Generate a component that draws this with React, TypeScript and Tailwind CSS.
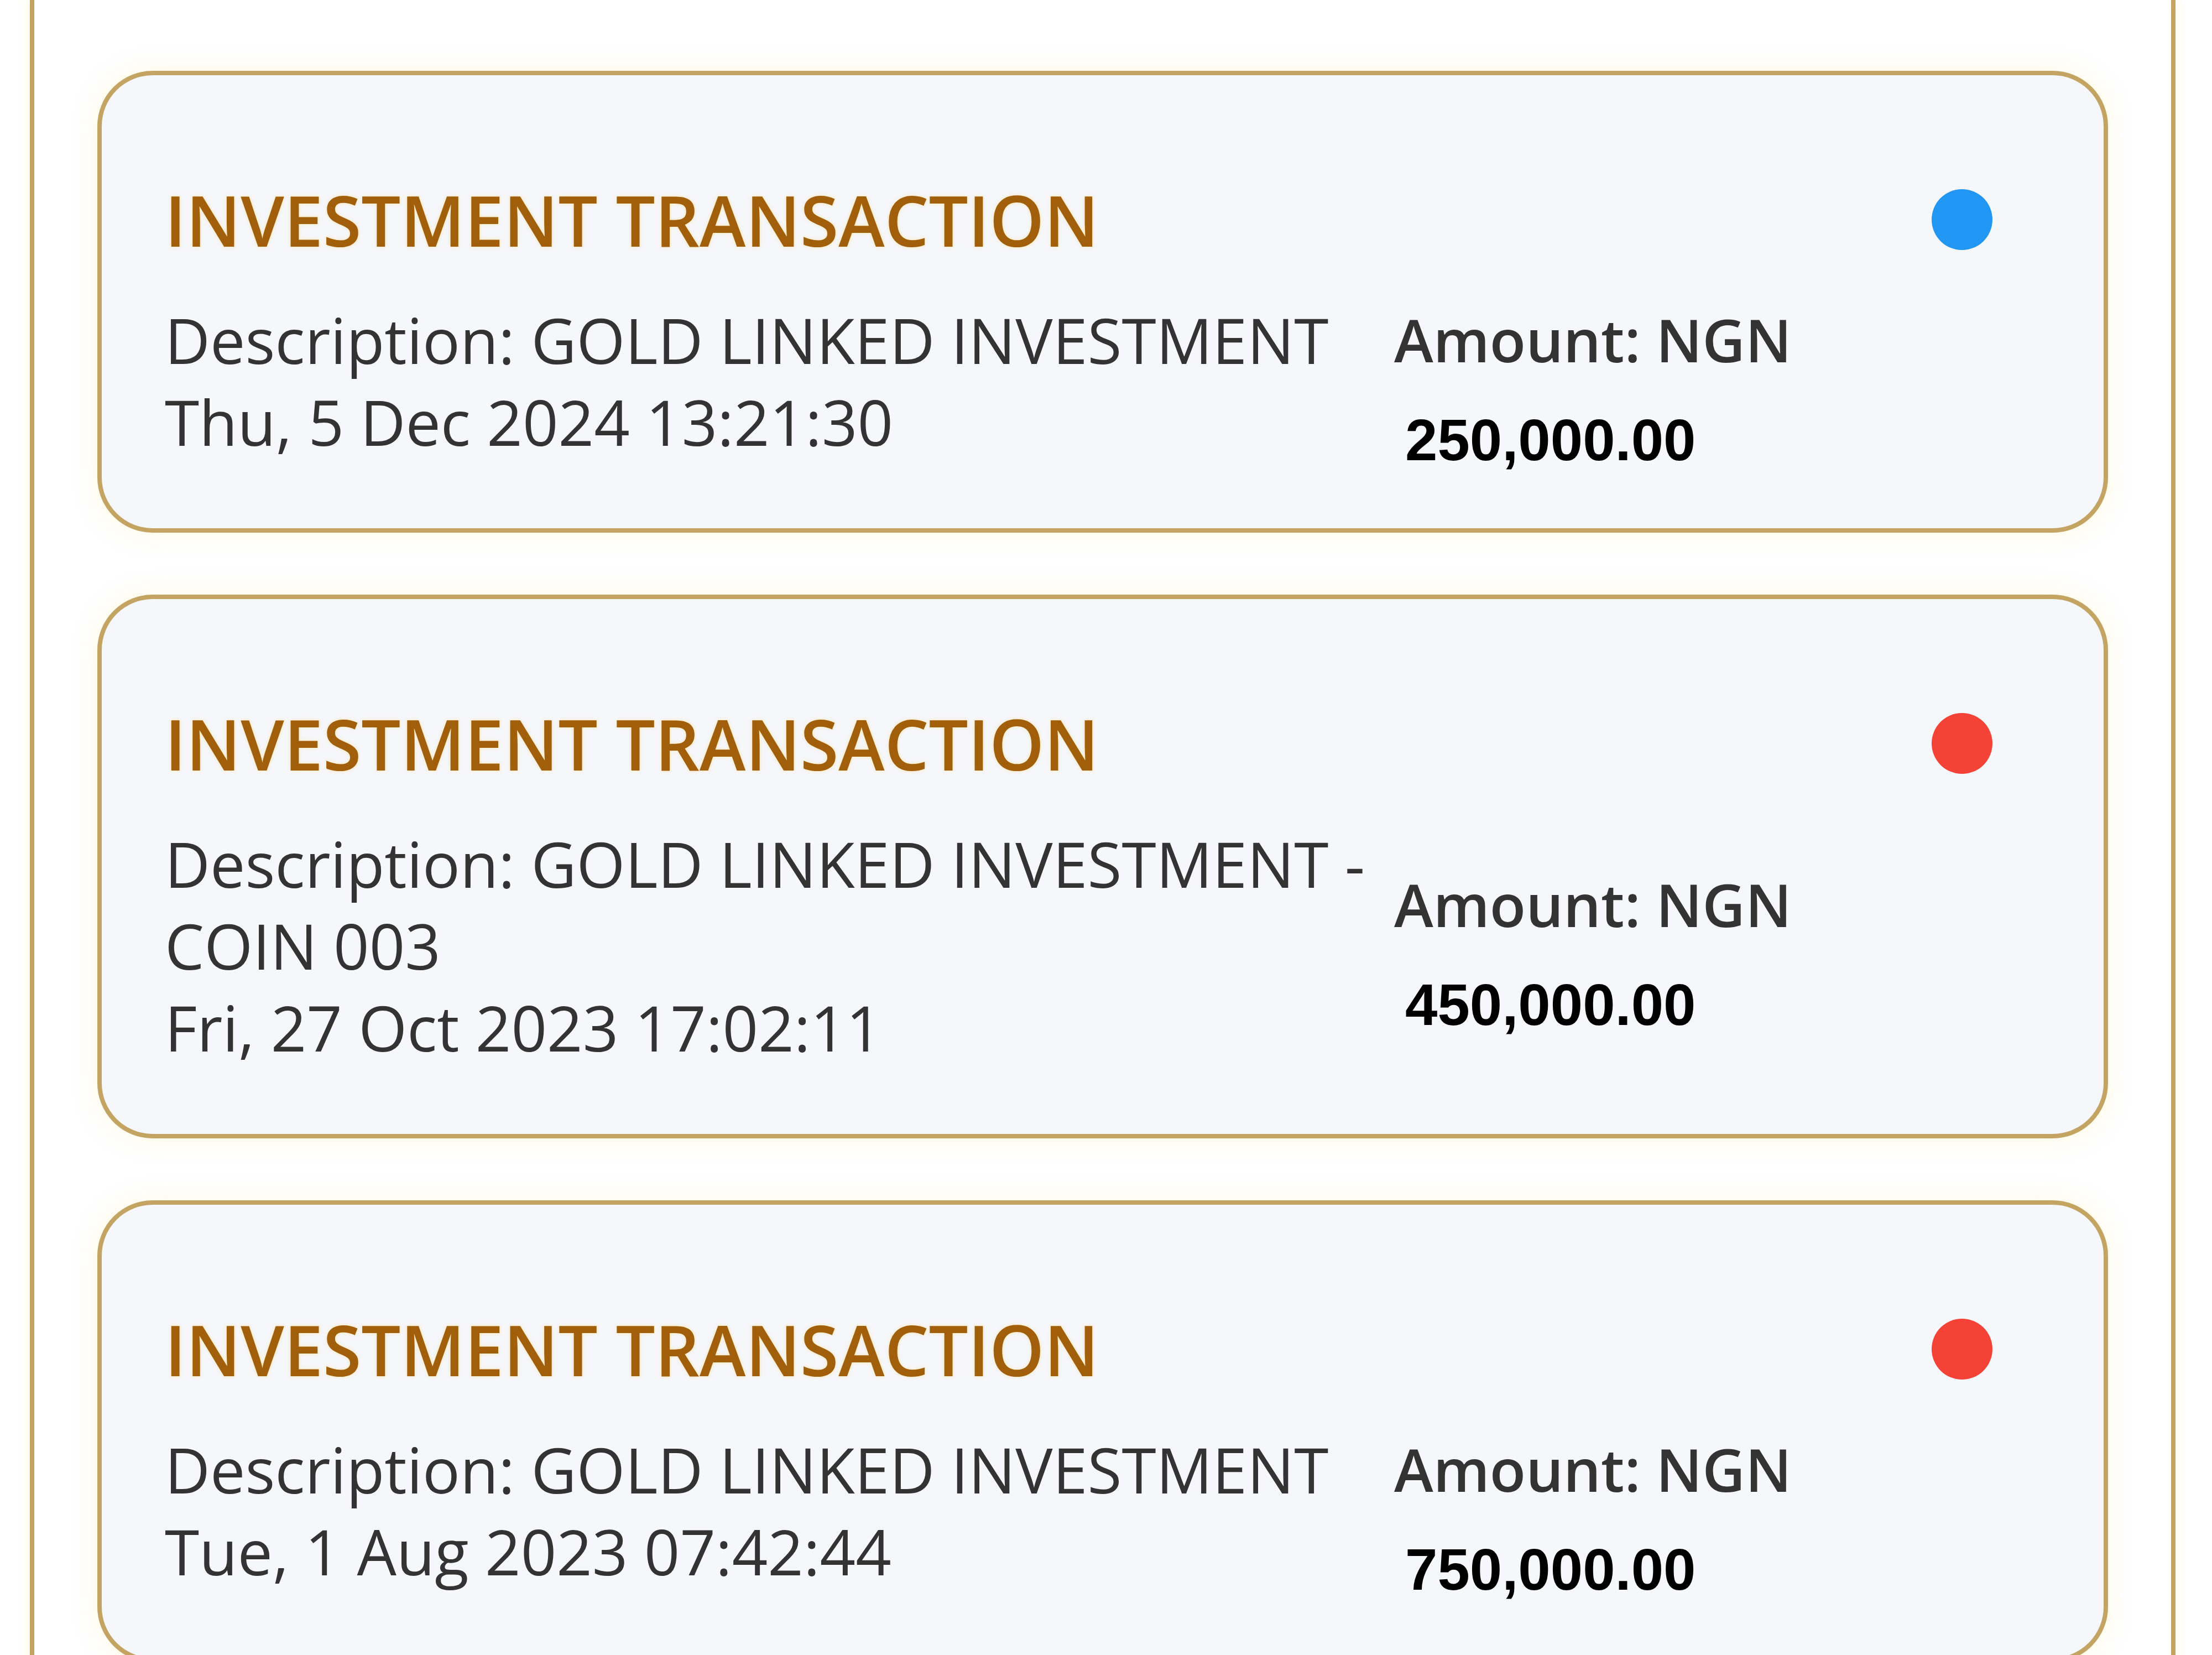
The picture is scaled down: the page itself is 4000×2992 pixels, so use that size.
import React from 'react'

type Txn = {
  id: number
  description: string
  date: string
  amount: string
  status: 'active' | 'closed'
}

const transactions: Txn[] = [
  { id: 1, description: 'GOLD LINKED INVESTMENT', date: 'Thu, 5 Dec 2024 13:21:30', amount: '250,000.00', status: 'active' },
  { id: 2, description: 'GOLD LINKED INVESTMENT - COIN 003', date: 'Fri, 27 Oct 2023 17:02:11', amount: '450,000.00', status: 'closed' },
  { id: 3, description: 'GOLD LINKED INVESTMENT', date: 'Tue, 1 Aug 2023 07:42:44', amount: '750,000.00', status: 'closed' },
]

function TxnCard({ txn }: { txn: Txn }) {
  return (
    <div className="shrink-0 rounded-[100px] border-[8px] border-[#c4a463] bg-[#f6f7fb] px-[114px] pt-[181px] pb-[119px] shadow-[0_0_40px_rgba(255,232,160,0.35)]">
      {/* header */}
      <div className="flex h-[160px] items-center justify-between">
        <h3 className="text-[126px] leading-[160px] font-semibold text-[#a25f0b] [text-shadow:0_0_6px_rgba(255,215,110,0.55)]">
          INVESTMENT TRANSACTION
        </h3>
        <span
          className={`mr-[87px] h-[110px] w-[110px] rounded-full ${
            txn.status === 'active' ? 'bg-[#2196f3]' : 'bg-[#f44336]'
          }`}
        />
      </div>

      {/* body */}
      <div className="mt-[63px] grid grid-cols-[2223px_1fr] items-center">
        <div className="text-[113px] leading-[148px] text-[#333333]">
          <div>Description: {txn.description}</div>
          <div>{txn.date}</div>
        </div>
        <div className="h-[296px]">
          <div className="text-[107px] leading-[148px] font-semibold text-[#333333]">Amount: NGN</div>
          <div className="mt-[47px] pl-[20px] font-['Liberation_Sans',Arial,sans-serif] text-[105px] leading-[122px] font-bold text-black">
            {txn.amount}
          </div>
        </div>
      </div>
    </div>
  )
}

export default function App() {
  return (
    <div className="h-[2992px] overflow-hidden bg-white font-['Open_Sans','Noto_Sans',sans-serif]">
      <div className="ml-[54px] flex min-h-[3200px] w-[3880px] flex-col gap-[112px] border-x-[8px] border-[#c4a463] px-[114px] pt-[128px] shadow-[0_0_20px_rgba(255,232,160,0.4)]">
        {transactions.map(txn => (
          <TxnCard key={txn.id} txn={txn} />
        ))}
      </div>
    </div>
  )
}
